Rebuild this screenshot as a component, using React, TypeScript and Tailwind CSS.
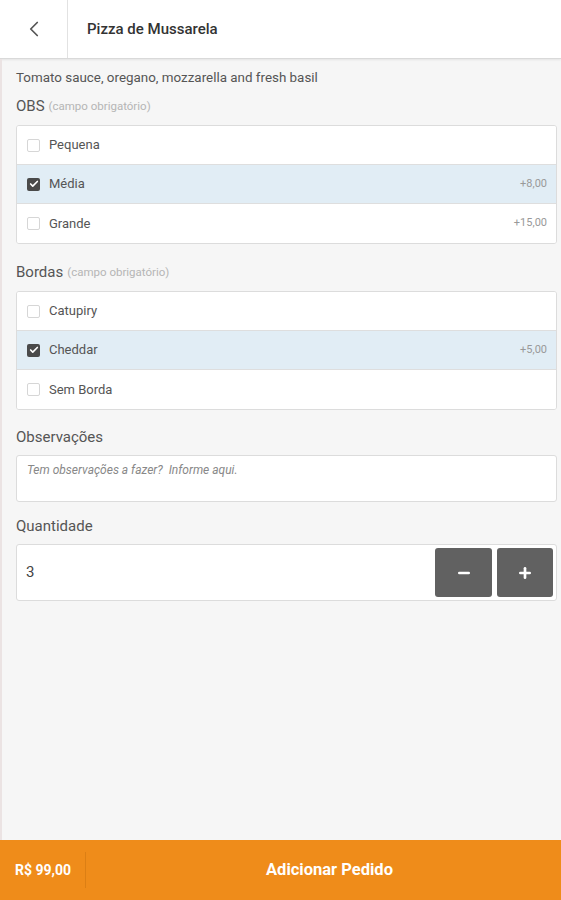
import { ChevronLeft, Minus, Plus, Check } from "lucide-react";

type Option = { label: string; price?: string; checked?: boolean };

const sizes: Option[] = [
  { label: "Pequena" },
  { label: "Média", price: "+8,00", checked: true },
  { label: "Grande", price: "+15,00" },
];

const borders: Option[] = [
  { label: "Catupiry" },
  { label: "Cheddar", price: "+5,00", checked: true },
  { label: "Sem Borda" },
];

function OptionRow({ option }: { option: Option }) {
  return (
    <div
      className={
        "flex h-[39px] items-center border-b border-[#dedede] last:border-b-0 pl-[10px] pr-[9px] " +
        (option.checked ? "bg-[#e1edf5]" : "bg-white")
      }>
      <span
        className={
          "flex h-[13px] w-[13px] items-center justify-center rounded-[2px] " +
          (option.checked ? "bg-[#4a4a4a]" : "border border-[#d6d6d6] bg-white")
        }>
        {option.checked && <Check className="h-[10px] w-[10px] text-white" strokeWidth={4} />}
      </span>
      <span className="ml-[9px] flex-1 text-[13px] text-[#555]">{option.label}</span>
      {option.price && <span className="text-[11px] text-[#999]">{option.price}</span>}
    </div>
  );
}

function Section({ title, options }: { title: string; options: Option[] }) {
  return (
    <div>
      <div className="flex h-[20px] items-end text-[15px] text-[#555]">
        {title}
        <span className="ml-[4px] mb-[2px] text-[11.5px] text-[#b5b5b5]">(campo obrigatório)</span>
      </div>
      <div className="mt-[8px] rounded-[3px] border border-[#dcdcdc] bg-white overflow-hidden">
        {options.map((o) => (
          <OptionRow key={o.label} option={o} />
        ))}
      </div>
    </div>
  );
}

export default function App() {
  return (
    <div
      className="flex h-[900px] w-[561px] flex-col bg-[#f6f6f6]"
      style={{ fontFamily: "Roboto, 'Noto Sans', sans-serif" }}>
      <header className="flex h-[59px] shrink-0 items-stretch border-b border-[#d9d9d9] bg-white shadow-[0_1px_2px_rgba(0,0,0,0.08)]">
        <div className="flex w-[68px] items-center justify-center border-r border-[#e2e2e2]">
          <ChevronLeft className="h-[26px] w-[26px] text-[#555]" strokeWidth={1.6} />
        </div>
        <div className="flex items-center pl-[19px] text-[15px] font-medium text-[#333]">
          Pizza de Mussarela
        </div>
      </header>

      <main className="flex flex-1 flex-col border-l-2 border-[#ebe3e3] pl-[14px] pr-[4px]">
        <p className="mt-[9px] text-[13.4px] text-[#555]">
          Tomato sauce, oregano, mozzarella and fresh basil
        </p>
        <div className="mt-[9px]">
          <Section title="OBS" options={sizes} />
        </div>
        <div className="mt-[19px]">
          <Section title="Bordas" options={borders} />
        </div>

        <div className="mt-[16px] text-[15px] text-[#555]">Observações</div>
        <div className="mt-[6px] h-[47px] rounded-[3px] border border-[#dcdcdc] bg-white px-[10px] pt-[5px] text-[12px] italic text-[#888]">
          Tem observações a fazer?&nbsp; Informe aqui.
        </div>

        <div className="mt-[13px] text-[15px] text-[#555]">Quantidade</div>
        <div className="mt-[7px] flex h-[57px] items-center rounded-[3px] border border-[#dcdcdc] bg-white pl-[9px] pr-[3px]">
          <span className="flex-1 text-[15px] text-[#444]">3</span>
          <button className="flex h-[49px] w-[57px] items-center justify-center rounded-[3px] bg-[#616161]">
            <Minus className="h-[16px] w-[16px] text-white" strokeWidth={4} />
          </button>
          <button className="ml-[5px] flex h-[49px] w-[56px] items-center justify-center rounded-[3px] bg-[#616161]">
            <Plus className="h-[16px] w-[16px] text-white" strokeWidth={4} />
          </button>
        </div>
      </main>

      <footer className="flex h-[60px] shrink-0 items-center bg-[#ef8c1a] text-white">
        <div className="flex h-[36px] w-[86px] items-center border-r border-[#dc7f14] pl-[15px] text-[14px] font-bold">
          R$ 99,00
        </div>
        <div className="flex flex-1 items-center justify-center pl-[12px] text-[16.5px] font-bold">
          Adicionar Pedido
        </div>
      </footer>
    </div>
  );
}
